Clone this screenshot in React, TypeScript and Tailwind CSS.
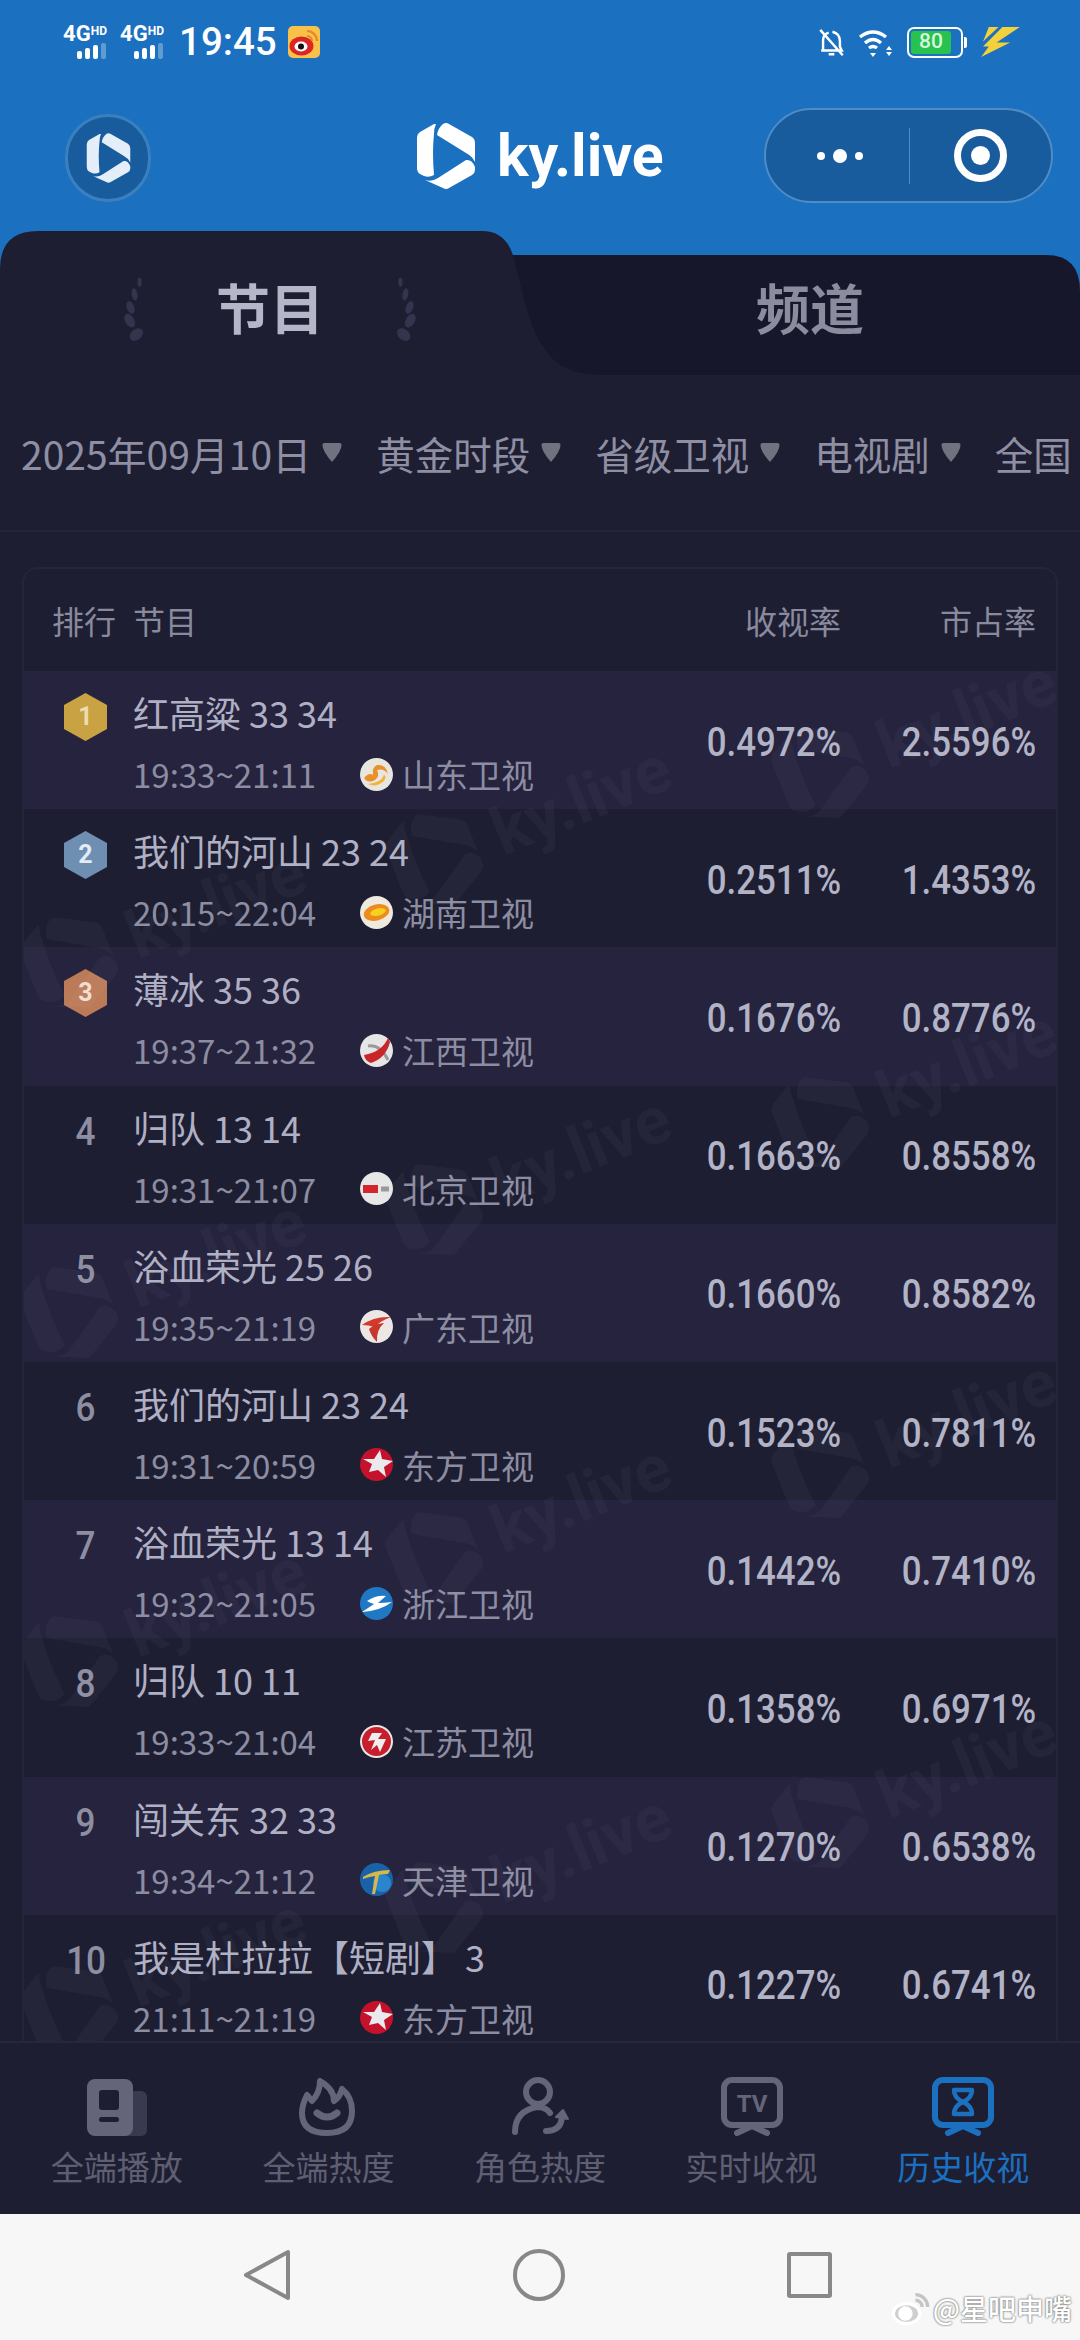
import React from "react";

const CJK = "font-['Noto_Sans_CJK_SC','Noto_Sans',sans-serif]";

function Logo({ className, fill = "#fff" }: { className?: string; fill?: string }) {
  return (
    <svg viewBox="0 0 60 68" className={className} fill={fill}>
      <path d="M18 2 L4 10 Q1 12 1 16 V46 Q1 50 4 52 L8 54 Q13 56 18 53 Q16 30 18 12 Q18 6 20 2 Z" />
      <path d="M21 13 Q22 6 27 2 Q30 0 33 2 L56 15 Q59 17 59 21 V40 Q56 34 50 31 Z" />
      <path d="M9 58 Q16 60 22 56 L50 38 Q56 37 59 45 V48 Q59 51 56 53 L33 66 Q30 68 27 66 Z" />
    </svg>
  );
}

function Signal() {
  return (
    <div className="flex w-[48px] flex-col items-center">
      <div className="flex h-[17px] items-start font-['Roboto',sans-serif] font-bold text-white">
        <span className="text-[22px] leading-[18px]">4G</span>
        <span className="text-[12px] leading-[12px]">HD</span>
      </div>
      <div className="mt-[1px] flex items-end gap-[3px] pl-[12px]">
        <div className="h-[8px] w-[5px] rounded-[2px] bg-white" />
        <div className="h-[11px] w-[5px] rounded-[2px] bg-white" />
        <div className="h-[14px] w-[5px] rounded-[2px] bg-white" />
        <div className="h-[16px] w-[5px] rounded-[2px] bg-white/30" />
      </div>
    </div>
  );
}

function StatusBar() {
  return (
    <div className="flex h-[84px] items-start justify-between pt-[25px] pl-[61px] pr-[60px]">
      <div className="flex items-center">
        <Signal />
        <div className="ml-[9px]"><Signal /></div>
        <span className="ml-[13px] font-['Roboto',sans-serif] text-[38.5px] leading-[34px] font-medium text-white">19:45</span>
        <svg viewBox="0 0 32 32" className="ml-[11px] h-[32px] w-[32px]">
          <rect width="32" height="32" rx="5" fill="#f8c24a" />
          <ellipse cx="13.5" cy="20" rx="12" ry="9.5" fill="#dc2626" />
          <ellipse cx="13" cy="20.5" rx="6.5" ry="5" fill="#fff" />
          <circle cx="13" cy="20.5" r="3" fill="#111" />
          <path d="M19 5 A10 10 0 0 1 29 15 M19 10 A5 5 0 0 1 24 15" stroke="#e8862a" strokeWidth="2.2" fill="none" />
        </svg>
      </div>
      <div className="flex items-center pt-[2px]">
        <svg viewBox="0 0 28 32" className="h-[30px] w-[27px]" fill="none" stroke="#fff" strokeWidth="2.6">
          <path d="M5 23 V13 Q5 7 11 5 M15 4 Q23 6 23 14 V20 L25 24 H3 M11 28 H17 M2 2 L26 29" />
        </svg>
        <svg viewBox="0 0 36 30" className="ml-[12px] h-[30px] w-[38px]" fill="none" stroke="#fff" strokeWidth="3.4">
          <path d="M2 9 Q15 -1 28 9 M7 15 Q15 8 23 15 M11 20 Q15 17 19 20" />
          <path d="M12 25 H18 L15 29 Z" fill="#fff" stroke="none" />
          <path d="M31 18 L28 22 H34 Z M28 24 H34 L31 28 Z" fill="#fff" stroke="none" />
        </svg>
        <div className="ml-[12px] flex items-center">
          <div className="flex h-[31px] w-[56px] items-center rounded-[7px] border-[2.5px] border-white p-[2px]">
            <div className="h-full w-[40px] rounded-[3px] bg-[#27c24f] text-center font-['Roboto',sans-serif] text-[21px] leading-[21px] font-medium text-[#d8f7dd]">80</div>
          </div>
          <div className="ml-[1px] h-[11px] w-[3px] rounded-r-[2px] bg-white" />
        </div>
        <svg viewBox="0 0 42 32" className="ml-[12px] h-[31px] w-[41px]" fill="#f2d13c">
          <path d="M10 0 H20 L4 15 Z M24 0 H42 L18 16 H32 L2 31 L10 20 H4 Z" />
        </svg>
      </div>
    </div>
  );
}

function Header() {
  return (
    <div className="flex h-[147px] items-start pt-[30px] pl-[65px]">
      <div className="flex h-[88px] w-[86px] items-center justify-center rounded-full border-[3px] border-[#3a80bf] bg-[#185c9e]">
        <Logo className="h-[52px] w-[45px]" fill="#e4eef8" />
      </div>
      <div className="ml-[265px] flex items-center pt-[8px]">
        <Logo className="h-[68px] w-[60px]" />
        <span className="ml-[21px] font-['Roboto',sans-serif] text-[59px] leading-[60px] font-bold text-white">ky.live</span>
      </div>
      <div className="ml-[100px] flex h-[95px] w-[289px] -translate-y-[6px] items-center rounded-full border-[2.5px] border-[#4d8cc6] bg-[#185c9e]">
        <div className="flex w-[143px] items-center justify-center gap-[8px] pl-[6px]">
          <div className="h-[8px] w-[8px] rounded-full bg-white" />
          <div className="h-[14px] w-[14px] rounded-full bg-white" />
          <div className="h-[8px] w-[8px] rounded-full bg-white" />
        </div>
        <div className="h-[56px] w-[1px] bg-[#4d8cc6]" />
        <div className="flex flex-1 justify-center">
          <div className="flex h-[53px] w-[53px] items-center justify-center rounded-full border-[7px] border-white">
            <div className="h-[19px] w-[19px] rounded-full bg-white" />
          </div>
        </div>
      </div>
    </div>
  );
}

function Laurel({ flip }: { flip?: boolean }) {
  const leaves = [
    [24, 5, 2.5, 6, 0],
    [18, 20, 3.5, 7.5, -10],
    [13, 36, 4.5, 8, -20],
    [12, 52, 5.5, 9, -30],
    [20, 69, 9, 6.5, -40],
  ];
  return (
    <svg viewBox="0 0 32 78" className={`h-[64px] w-[30px] ${flip ? "-scale-x-100" : ""}`} fill="#34344e">
      {leaves.map((l, i) => (
        <ellipse key={i} cx={l[0]} cy={l[1]} rx={l[2]} ry={l[3]} transform={`rotate(${l[4]} ${l[0]} ${l[1]})`} />
      ))}
    </svg>
  );
}

function Tabs() {
  return (
    <div className={`relative h-[144px] ${CJK}`}>
      <svg viewBox="0 0 1080 144" className="absolute inset-0 h-[144px] w-[1080px]">
        <path d="M500 24 H1046 Q1080 24 1080 60 V144 H500 Z" fill="#17172b" />
        <path d="M0 38 Q0 0 38 0 H482 Q505 0 513 24 C525 70 530 100 545 118 C555 135 575 144 600 144 H1080 V150 H0 Z" fill="#1e1e33" />
      </svg>
      <div className="relative flex h-full">
        <div className="flex w-[540px] justify-center pt-[44px]">
          <div className="flex items-start gap-[68px]">
            <div className="pt-[3px]"><Laurel /></div>
            <span className="text-[54px] leading-[64px] font-bold text-[#b6b6c9]">节目</span>
            <div className="pt-[3px]"><Laurel flip /></div>
          </div>
        </div>
        <div className="flex w-[540px] justify-center pt-[44px]">
          <span className="text-[54px] leading-[64px] font-bold text-[#8c8c9f]">频道</span>
        </div>
      </div>
    </div>
  );
}

function Caret() {
  return (
    <svg viewBox="0 0 22 22" className="ml-[10px] h-[21px] w-[22px] shrink-0" fill="#70727f">
      <path d="M1 3 Q1 1 3 1 H19 Q21 1 21 3 Q21 10 11 21 Q1 10 1 3 Z" />
    </svg>
  );
}

function Filters() {
  const items = ["黄金时段", "省级卫视", "电视剧"];
  return (
    <div className={`flex h-[157px] items-center gap-[33px] overflow-hidden border-b-2 border-[#24243a] pl-[21px] ${CJK}`}>
      <div className="flex shrink-0 items-center">
        <span className="text-[39px] leading-[50px] text-[#8f8fa3]">2025年09月10日</span>
        <Caret />
      </div>
      {items.map((t) => (
        <div key={t} className="flex shrink-0 items-center">
          <span className="text-[38.5px] leading-[50px] text-[#8f8fa3]">{t}</span>
          <Caret />
        </div>
      ))}
      <div className="flex shrink-0 items-center">
        <span className="text-[38.5px] leading-[50px] text-[#8f8fa3]">全国</span>
        <Caret />
      </div>
    </div>
  );
}

function ChannelIcon({ id }: { id: string }) {
  const c = "h-[33px] w-[33px] shrink-0";
  switch (id) {
    case "山东":
      return (
        <svg viewBox="0 0 33 33" className={c}>
          <circle cx="16.5" cy="16.5" r="16.5" fill="#e9e6e0" />
          <path d="M4 20 Q8 26 15 22 Q20 18 17 12 Q24 10 28 16 Q26 6 17 7 Q12 9 13 17 Q9 14 4 20 Z" fill="#e8912a" />
          <path d="M8 26 Q16 30 24 23 Q27 18 24 17 Q21 25 8 26 Z" fill="#f0b23c" />
        </svg>
      );
    case "湖南":
      return (
        <svg viewBox="0 0 33 33" className={c}>
          <circle cx="16.5" cy="16.5" r="16.5" fill="#efeadf" />
          <ellipse cx="16.5" cy="16.5" rx="13" ry="8" fill="#ed8b1e" transform="rotate(-15 16.5 16.5)" />
          <ellipse cx="18" cy="16" rx="8" ry="3.5" fill="#f5d21f" transform="rotate(-15 18 16)" />
        </svg>
      );
    case "江西":
      return (
        <svg viewBox="0 0 33 33" className={c}>
          <circle cx="16.5" cy="16.5" r="16.5" fill="#e6e6e6" />
          <path d="M8 12 Q20 10 28 26" stroke="#9a9a9a" strokeWidth="3" fill="none" />
          <path d="M28 4 Q22 18 4 21 Q5 27 11 29 Q26 24 30 8 Z" fill="#c9262a" />
        </svg>
      );
    case "北京":
      return (
        <svg viewBox="0 0 33 33" className={c}>
          <circle cx="16.5" cy="16.5" r="16.5" fill="#e7e7e7" />
          <rect x="3" y="13" width="15" height="8" fill="#d0262c" />
          <rect x="21" y="14.5" width="8" height="5" fill="#999" />
        </svg>
      );
    case "广东":
      return (
        <svg viewBox="0 0 33 33" className={c}>
          <circle cx="16.5" cy="16.5" r="16.5" fill="#ece7e4" />
          <path d="M2 15 Q14 6 31 7 Q20 11 15 17 Q8 15 2 15 Z" fill="#d33a2c" />
          <path d="M9 19 Q14 14 24 13 Q16 20 17 32 Q11 26 9 19 Z" fill="#c8382a" />
        </svg>
      );
    case "东方":
      return (
        <svg viewBox="0 0 33 33" className={c}>
          <circle cx="16.5" cy="16.5" r="16.5" fill="#c4122d" />
          <path d="M20 2 L22 11 L33 13 L24 19 L26 29 L18 22 L9 24 L12 16 L3 11 L14 11 Z" fill="#e9e9ee" />
        </svg>
      );
    case "浙江":
      return (
        <svg viewBox="0 0 33 33" className={c}>
          <circle cx="16.5" cy="16.5" r="16.5" fill="#1f78c4" />
          <path d="M7 14 Q16 8 26 9 L18 16 Q24 16 32 15 Q20 24 2 25 Q8 21 14 17 Q10 16 7 14 Z" fill="#fff" />
        </svg>
      );
    case "江苏":
      return (
        <svg viewBox="0 0 33 33" className={c}>
          <circle cx="16.5" cy="16.5" r="16.5" fill="#e8e8e8" />
          <circle cx="16.5" cy="16.5" r="14.5" fill="#c81f2d" />
          <path d="M12 8 H22 L18 14 H26 L20 27 L17 20 L11 25 L15 15 L8 16 Z" fill="#efefef" />
        </svg>
      );
    default:
      return (
        <svg viewBox="0 0 33 33" className={c}>
          <circle cx="16.5" cy="16.5" r="16.5" fill="#1a62a8" />
          <circle cx="22" cy="20" r="9" fill="#2a86cc" />
          <path d="M3 14 Q14 7 30 7 L28 11 Q22 11 19 12 L15 31 H12 L15 13 Q8 14 3 16 Z" fill="#d8b84a" />
        </svg>
      );
  }
}

function Rank({ n }: { n: number }) {
  if (n <= 3) {
    const fill = ["#c9a244", "#6f8fb2", "#bb7a58"][n - 1];
    const color = ["#ecdcae", "#e3ebf4", "#f1ddd0"][n - 1];
    return (
      <div className="relative mt-[22px] h-[48px] w-[43px]">
        <svg viewBox="0 0 43 48" className="absolute inset-0 h-[48px] w-[43px]" fill={fill}>
          <path d="M21.5 0 L43 12 V36 L21.5 48 L0 36 V12 Z" />
        </svg>
        <div className="relative text-center font-['Roboto',sans-serif] text-[25px] leading-[48px] font-bold" style={{ color }}>{n}</div>
      </div>
    );
  }
  return <div className="mt-[21px] w-[43px] scale-x-[0.9] text-center font-['Roboto',sans-serif] text-[39px] leading-[50px] font-medium text-[#8e8ea3]">{n}</div>;
}

const rows = [
  { t: "红高粱 33 34", time: "19:33~21:11", ch: "山东", a: "0.4972%", b: "2.5596%" },
  { t: "我们的河山 23 24", time: "20:15~22:04", ch: "湖南", a: "0.2511%", b: "1.4353%" },
  { t: "薄冰 35 36", time: "19:37~21:32", ch: "江西", a: "0.1676%", b: "0.8776%" },
  { t: "归队 13 14", time: "19:31~21:07", ch: "北京", a: "0.1663%", b: "0.8558%" },
  { t: "浴血荣光 25 26", time: "19:35~21:19", ch: "广东", a: "0.1660%", b: "0.8582%" },
  { t: "我们的河山 23 24", time: "19:31~20:59", ch: "东方", a: "0.1523%", b: "0.7811%" },
  { t: "浴血荣光 13 14", time: "19:32~21:05", ch: "浙江", a: "0.1442%", b: "0.7410%" },
  { t: "归队 10 11", time: "19:33~21:04", ch: "江苏", a: "0.1358%", b: "0.6971%" },
  { t: "闯关东 32 33", time: "19:34~21:12", ch: "天津", a: "0.1270%", b: "0.6538%" },
  { t: "我是杜拉拉【短剧】 3", time: "21:11~21:19", ch: "东方", a: "0.1227%", b: "0.6741%" },
];

function Pct({ v }: { v: string }) {
  return (
    <div className="flex w-[195px] items-center justify-end pt-[3px]">
      <span className="origin-right scale-x-[0.85] font-['Roboto',sans-serif] text-[41px] leading-[44px] font-medium text-[#b3b3c6]">{v}</span>
    </div>
  );
}

function Row({ r, i }: { r: (typeof rows)[number]; i: number }) {
  return (
    <div className={`flex h-[138.2px] pl-[40px] pr-[20px] ${i % 2 === 0 ? "bg-[#25233e]" : "bg-[#1e1e33]"}`}>
      <Rank n={i + 1} />
      <div className={`ml-[26px] flex-1 pt-[16px] ${CJK}`}>
        <div className="text-[36px] leading-[50px] whitespace-nowrap text-[#b0b0c4]">{r.t}</div>
        <div className="mt-[15px] flex h-[44px] items-center text-[#8d8da2]">
          <span className="w-[227px] text-[33px] leading-[44px]">{r.time}</span>
          <ChannelIcon id={r.ch} />
          <span className="ml-[9px] text-[33px] leading-[44px]">{r.ch}卫视</span>
        </div>
      </div>
      <Pct v={r.a} />
      <Pct v={r.b} />
    </div>
  );
}

const marks = [
  [806, 160], [806, 510], [806, 860], [806, 1210],
  [420, 247], [420, 597], [420, 945], [420, 1295],
  [55, 350], [55, 700], [55, 1049], [55, 1399],
];

function Table() {
  return (
    <div className={`relative mx-[22px] mt-[35px] overflow-hidden rounded-t-[16px] border-x-2 border-t-2 border-[#24243a] ${CJK}`}>
      <div className="flex h-[102px] items-center pl-[28px] pr-[20px] text-[#8a8a9e]">
        <span className="w-[81px] text-[32px] leading-[44px]">排行</span>
        <span className="flex-1 text-[32px] leading-[44px]">节目</span>
        <span className="w-[195px] text-right text-[32px] leading-[44px]">收视率</span>
        <span className="w-[195px] text-right text-[32px] leading-[44px]">市占率</span>
      </div>
      {rows.map((r, i) => <Row key={i} r={r} i={i} />)}
      {marks.map((m, i) => (
        <div key={i} className="pointer-events-none absolute flex -rotate-[22deg] items-center" style={{ left: m[0] - 60, top: m[1] - 45 }}>
          <Logo className="h-[100px] w-[88px]" fill="rgba(255,255,255,0.03)" />
          <span className="ml-[20px] font-['Roboto',sans-serif] text-[66px] leading-[80px] font-bold text-white/[0.03]">ky.live</span>
        </div>
      ))}
    </div>
  );
}

function IconPlay() {
  return (
    <svg viewBox="0 0 60 60" className="h-[60px] w-[60px]">
      <rect x="30" y="14" width="30" height="45" rx="6" fill="#393950" />
      <rect x="0" y="2" width="46" height="57" rx="8" fill="#65657a" />
      <rect x="12" y="13" width="20" height="20" rx="3" fill="#1e1e33" />
      <rect x="12" y="40" width="20" height="5" rx="2.5" fill="#1e1e33" />
    </svg>
  );
}
function IconFlame() {
  return (
    <svg viewBox="0 0 60 60" className="h-[60px] w-[60px]" fill="none" stroke="#65657a" strokeWidth="6" strokeLinecap="round" strokeLinejoin="round">
      <path d="M22 4 Q22 16 14 24 Q11 20 9 18 Q4 28 4 36 Q4 56 29 56 Q54 56 54 34 Q54 20 44 12 Q42 20 36 24 Q36 12 22 4 Z" />
      <path d="M19 36 Q29 44 39 36" strokeWidth="7" />
    </svg>
  );
}
function IconRole() {
  return (
    <svg viewBox="0 0 60 60" className="h-[60px] w-[60px]" fill="none" stroke="#65657a" strokeWidth="6" strokeLinecap="round" strokeLinejoin="round">
      <ellipse cx="28" cy="15" rx="12" ry="12" />
      <path d="M5 55 Q5 34 27 30 Q36 30 40 36" />
      <path d="M36 54 Q52 54 52 38" />
      <path d="M46 40 L53 33 L58 42 Z" fill="#65657a" strokeWidth="2" />
    </svg>
  );
}
function IconScreen({ color, children }: { color: string; children: React.ReactNode }) {
  return (
    <svg viewBox="0 0 62 60" className="h-[60px] w-[62px]" fill="none" stroke={color} strokeLinecap="round" strokeLinejoin="round">
      <rect x="3" y="3" width="56" height="45" rx="8" strokeWidth="6" />
      <path d="M16 56 L31 49 L46 56" strokeWidth="6" />
      {children}
    </svg>
  );
}

function NavBar() {
  const items = [
    { l: "全端播放", i: <IconPlay /> },
    { l: "全端热度", i: <IconFlame /> },
    { l: "角色热度", i: <IconRole /> },
    {
      l: "实时收视",
      i: (
        <IconScreen color="#65657a">
          <text x="31" y="35" textAnchor="middle" fontSize="24" fontWeight="700" fontFamily="Roboto, sans-serif" fill="#65657a" stroke="none">TV</text>
        </IconScreen>
      ),
    },
    {
      l: "历史收视",
      a: true,
      i: (
        <IconScreen color="#1c70c0">
          <path d="M22 13 H40 Q40 21 31 25 Q22 21 22 13 Z M22 37 H40 Q40 29 31 25 Q22 29 22 37 Z" strokeWidth="4.5" />
        </IconScreen>
      ),
    },
  ];
  return (
    <div className={`grid h-[173px] shrink-0 grid-cols-5 border-t-2 border-[#26263d] bg-[#1e1e33] px-[11px] pt-[34px] ${CJK}`}>
      {items.map((it) => (
        <div key={it.l} className="flex flex-col items-center">
          <div className="flex h-[60px] items-center justify-center">{it.i}</div>
          <span className={`mt-[6px] text-[33px] leading-[46px] ${it.a ? "text-[#1c70c0]" : "text-[#5f5f72]"}`}>{it.l}</span>
        </div>
      ))}
    </div>
  );
}

function SystemBar() {
  return (
    <div className="relative flex h-[126px] shrink-0 items-center justify-between bg-[#f7f7f7] pr-[248px] pl-[244px] pb-[4px]">
      <svg viewBox="0 0 46 52" className="h-[52px] w-[46px]" fill="none" stroke="#888" strokeWidth="4" strokeLinejoin="round">
        <path d="M44 3 V49 L2 26 Z" />
      </svg>
      <div className="h-[52px] w-[52px] rounded-full border-[4px] border-[#888]" />
      <div className="h-[46px] w-[45px] rounded-[3px] border-[4px] border-[#888]" />
      <div className={`absolute right-[8px] bottom-[14px] flex items-center ${CJK}`}>
        <svg viewBox="0 0 36 32" className="h-[36px] w-[40px]" fill="none" stroke="#fff" strokeWidth="3">
          <ellipse cx="14" cy="21" rx="12" ry="9" fill="#cfcfcf" />
          <circle cx="13" cy="21" r="5" fill="#fff" />
          <path d="M22 4 A11 11 0 0 1 33 15 M22 9 A6 6 0 0 1 28 15" stroke="#c4c4c4" />
        </svg>
        <span className="ml-[2px] text-[28px] leading-[36px] font-medium text-white [text-shadow:0_0_2px_#777,0_0_2px_#777]">@星吧申嘴</span>
      </div>
    </div>
  );
}

export default function App() {
  return (
    <div className="flex h-[2340px] w-[1080px] flex-col overflow-hidden bg-[#1c70c0]">
      <StatusBar />
      <Header />
      <Tabs />
      <div className="min-h-0 flex-1 overflow-hidden bg-[#1e1e33]">
        <Filters />
        <Table />
      </div>
      <NavBar />
      <SystemBar />
    </div>
  );
}
